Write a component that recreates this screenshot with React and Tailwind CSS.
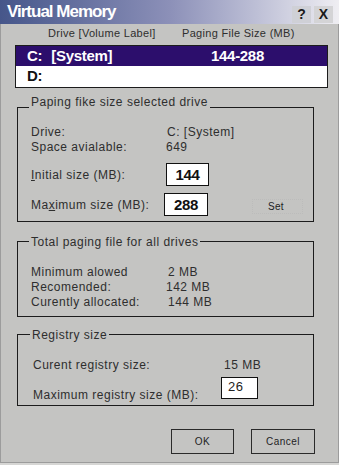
import React from "react";
import clsx from "clsx";

const BG = "bg-[#c4c4c2]";

function Group({ label, labelTop, labelLeft, className, children }) {
	return (<div className={clsx("relative ml-[17px] w-[297px] border border-[#1c1c1c]", className)}>
		<span className={clsx("absolute px-[2px] leading-[14px]", BG, labelTop, labelLeft)}>{label}</span>
		{children}
	</div>);
}

function Field({ children, className }) {
	return (<div className={clsx("flex h-[23px] items-center justify-center border border-[#111] bg-white font-bold text-[15px] tracking-[-0.3px] text-[#111]", className)}>
		{children}
	</div>);
}

export default function App() {
	return (<div className="w-[339px] h-[465px] bg-[#d6d6d4]" style={{ fontFamily: '"Liberation Sans", Arial, sans-serif' }}>
		<div className={clsx("flex h-[463px] flex-col shadow-[inset_0_0_0_1px_#9c9c9c] text-[12px] tracking-[0.5px] text-[#2e2e2e]", BG)}>
			{/* title bar */}
			<div className="flex h-[24px] shrink-0 items-center bg-linear-to-r from-[#46568a] via-[#8c90b8] to-[#efeef2] pl-[7px] pr-[6px]">
				<span className="flex-1 font-bold text-[17px] tracking-[-1px] text-white">Virtual Memory</span>
				<div className="flex gap-[3px] self-end mb-[1px]">
					<span className="flex h-[17px] w-[19px] items-center justify-center bg-[#cfd0d6] font-bold text-[14px] tracking-normal text-[#1a1a1a]">?</span>
					<span className="flex h-[17px] w-[19px] items-center justify-center bg-[#d4d4d6] font-bold text-[14px] tracking-normal text-[#1a1a1a]">X</span>
				</div>
			</div>

			{/* column headers */}
			<div className="mt-[2px] flex h-[14px] items-center text-[11px] tracking-[0.3px] leading-[14px]">
				<span className="ml-[48px] w-[134px]">Drive [Volume Label]</span>
				<span>Paging File Size (MB)</span>
			</div>

			{/* drive list */}
			<div className="ml-[15px] mt-[5px] w-[313px] border border-[#1c1c1c] bg-white text-[15px] font-bold tracking-[-0.3px]">
				<div className="flex h-[20px] items-center bg-[#2c0e6c] pl-[11px] text-white">
					<span className="flex w-[184px]"><span>C:</span><span className="ml-[9px]">[System]</span></span>
					<span>144-288</span>
				</div>
				<div className="flex h-[21px] items-center pl-[11px] text-[#111]">D:</div>
			</div>

			{/* paging file for selected drive */}
			<Group label="Paping fike size selected drive" labelTop="top-[-13px]" labelLeft="left-[11px]" className="mt-[19px] h-[115px]">
				<div className="pl-[13px] pt-[17px] leading-[15px]">
					<div className="flex"><span className="w-[135px]">Drive:</span><span className="ml-[1px]">C: [System]</span></div>
					<div className="flex"><span className="w-[135px]">Space avialable:</span><span>649</span></div>
					<div className="mt-[8px] flex items-center">
						<span className="w-[135px] pt-[2px]"><u>I</u>nitial size (MB):</span>
						<Field className="w-[43px]">144</Field>
					</div>
					<div className="mt-[7px] flex items-center">
						<span className="w-[133px] pt-[2px]">Ma<u>x</u>imum size (MB):</span>
						<Field className="w-[44px]">288</Field>
						<span className="ml-[44px] mt-[4px] border border-dotted border-[#bcbcbb] pl-[15px] pr-[18px] text-[10px] tracking-[0.3px] leading-[13px] text-[#222]">Set</span>
					</div>
				</div>
			</Group>

			{/* totals */}
			<Group label="Total paging file for all drives" labelTop="top-[-7px]" labelLeft="left-[11px]" className="mt-[19px] h-[76px]">
				<div className="pl-[13px] pt-[23px] leading-[15px]">
					<div className="flex"><span className="w-[137px]">Minimum alowed</span><span>2 MB</span></div>
					<div className="flex"><span className="w-[135px]">Recomended:</span><span>142 MB</span></div>
					<div className="flex"><span className="w-[137px]">Curently allocated:</span><span>144 MB</span></div>
				</div>
			</Group>

			{/* registry */}
			<Group label="Registry size" labelTop="top-[-7px]" labelLeft="left-[12px]" className="mt-[17px] h-[72px]">
				<div className="pl-[15px] pt-[23px] leading-[15px]">
					<div className="flex"><span className="w-[191px]">Curent registry size:</span><span>15 MB</span></div>
					<div className="mt-[4px] flex items-start">
						<span className="mt-[11px] w-[188px]">Maximum registry size (MB):</span>
						<div className="h-[22px] w-[37px] border border-[#111] bg-white pl-[6px] pt-[1px] text-[13px] leading-[15px] text-[#222]">26</div>
					</div>
				</div>
			</Group>

			{/* buttons */}
			<div className="mt-[23px] flex gap-[17px] pl-[171px] text-[10px] tracking-[0.5px] text-[#222]">
				<button className="flex h-[25px] w-[63px] items-center justify-center border border-[#2a2a2a]">OK</button>
				<button className="flex h-[25px] w-[64px] items-center justify-center border border-[#2a2a2a]">Cancel</button>
			</div>
		</div>
	</div>);
}
